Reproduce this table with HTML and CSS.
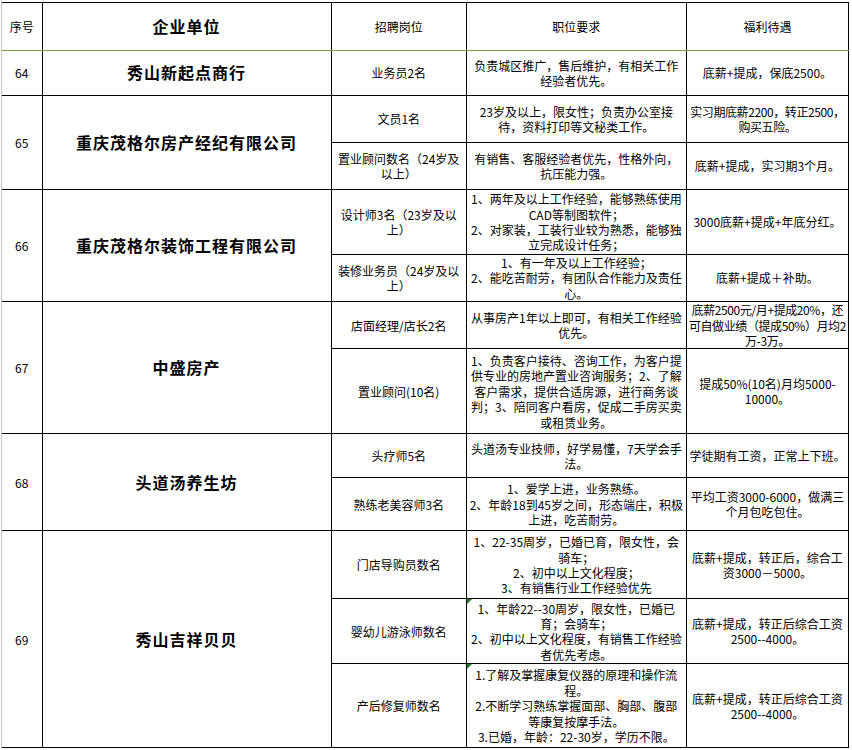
FILE: index.html
```html
<!DOCTYPE html>
<html lang="zh-CN">
<head>
<meta charset="utf-8">
<title>招聘信息</title>
<link rel="stylesheet" href="styles.css">
</head>
<body>
<div class="sheet">
<table class="grid">
<colgroup>
<col class="c-no"><col class="c-co"><col class="c-job"><col class="c-req"><col class="c-pay">
</colgroup>
<tr class="r-head">
<th>序号</th><th class="co">企业单位</th><th>招聘岗位</th><th>职位要求</th><th>福利待遇</th>
</tr>
<tr class="r45">
<td>64</td><td class="co">秀山新起点商行</td><td>业务员2名</td>
<td>负责城区推广，售后维护，有相关工作<br>经验者优先。</td>
<td>底薪+提成，保底2500。</td>
</tr>
<tr class="r47">
<td rowspan="2">65</td><td rowspan="2" class="co">重庆茂格尔房产经纪有限公司</td><td>文员1名</td>
<td>23岁及以上，限女性；负责办公室接<br>待，资料打印等文秘类工作。</td>
<td class="tight">实习期底薪2200，转正2500，<br>购买五险。</td>
</tr>
<tr class="r47">
<td>置业顾问数名（24岁及<br>以上）</td>
<td>有销售、客服经验者优先，性格外向，<br>抗压能力强。</td>
<td>底薪+提成，实习期3个月。</td>
</tr>
<tr class="r65">
<td rowspan="2">66</td><td rowspan="2" class="co">重庆茂格尔装饰工程有限公司</td><td>设计师3名（23岁及以<br>上）</td>
<td>1、两年及以上工作经验，能够熟练使用<br>CAD等制图软件；<br>2、对家装，工装行业较为熟悉，能够独<br>立完成设计任务；</td>
<td>3000底薪+提成+年底分红。</td>
</tr>
<tr class="r47">
<td>装修业务员（24岁及以<br>上）</td>
<td>1、有一年及以上工作经验；<br>2、能吃苦耐劳，有团队合作能力及责任<br>心。</td>
<td>底薪+提成＋补助。</td>
</tr>
<tr class="r47">
<td rowspan="2">67</td><td rowspan="2" class="co">中盛房产</td><td>店面经理/店长2名</td>
<td>从事房产1年以上即可，有相关工作经验<br>优先。</td>
<td class="tight">底薪2500元/月+提成20%，还<br>可自做业绩（提成50%）月均2<br>万-3万。</td>
</tr>
<tr class="r85">
<td>置业顾问(10名)</td>
<td>1、负责客户接待、咨询工作，为客户提<br>供专业的房地产置业咨询服务；2、了解<br>客户需求，提供合适房源，进行商务谈<br>判；3、陪同客户看房，促成二手房买卖<br>或租赁业务。</td>
<td>提成50%(10名)月均5000-<br>10000。</td>
</tr>
<tr class="r44">
<td rowspan="2">68</td><td rowspan="2" class="co">头道汤养生坊</td><td>头疗师5名</td>
<td>头道汤专业技师，好学易懂，7天学会手<br>法。</td>
<td>学徒期有工资，正常上下班。</td>
</tr>
<tr class="r53">
<td>熟练老美容师3名</td>
<td>1、爱学上进，业务熟练。<br>2、年龄18到45岁之间，形态端庄，积极<br>上进，吃苦耐劳。</td>
<td>平均工资3000-6000，做满三<br>个月包吃包住。</td>
</tr>
<tr class="r68">
<td rowspan="3">69</td><td rowspan="3" class="co">秀山吉祥贝贝</td><td>门店导购员数名</td>
<td>1、22-35周岁，已婚已育，限女性，会<br>骑车；<br>2、初中以上文化程度；<br>3、有销售行业工作经验优先</td>
<td>底薪+提成，转正后，综合工<br>资3000－5000。</td>
</tr>
<tr class="r65">
<td>婴幼儿游泳师数名</td>
<td class="flag">1、年龄22--30周岁，限女性，已婚已<br>育；会骑车；<br>2、初中以上文化程度，有销售工作经验<br>者优先考虑。</td>
<td>底薪+提成，转正后综合工资<br>2500--4000。</td>
</tr>
<tr class="r84">
<td>产后修复师数名</td>
<td class="flag">1.了解及掌握康复仪器的原理和操作流<br>程。<br>2.不断学习熟练掌握面部、胸部、腹部<br>等康复按摩手法。<br>3.已婚，年龄：22-30岁，学历不限。</td>
<td>底薪+提成，转正后综合工资<br>2500--4000。</td>
</tr>
</table>
</div>
</body>
</html>
```
FILE: styles.css
```css
html, body {
  margin: 0;
  padding: 0;
  background: #ffffff;
}
body {
  font-family: "Noto Sans CJK SC", "Noto Sans", sans-serif;
  font-size: 12px;
  color: #000000;
}
.sheet {
  margin-left: 1px;
  border-left: 1px solid #c8c8c8;
  padding-top: 2px;
  height: 748px;
  box-sizing: border-box;
  overflow: hidden;
}
.grid {
  border-collapse: collapse;
  table-layout: fixed;
  width: 847px;
}
.c-no { width: 40px; }
.c-co { width: 289px; }
.c-job { width: 135px; }
.c-req { width: 220px; }
.c-pay { width: 162px; }
.grid th,
.grid td {
  border: 1px solid #000000;
  padding: 0;
  text-align: center;
  vertical-align: middle;
  white-space: nowrap;
  line-height: 15.4px;
  font-weight: normal;
  font-size: 12px;
}
.grid tr > :first-child {
  border-left: none;
}
.grid th {
  border-bottom: 1px solid #76a04f;
}
.grid .co {
  font-size: 16px;
  font-weight: 700;
  letter-spacing: 1px;
}
.grid .tight {
  letter-spacing: -0.4px;
}
.r-head { height: 48px; }
.r44 { height: 44px; }
.r45 { height: 45px; }
.r47 { height: 47px; }
.r53 { height: 53px; }
.r65 { height: 65px; }
.r68 { height: 68px; }
.r84 { height: 84px; }
.r85 { height: 85px; }
.flag {
  position: relative;
}
.flag::before {
  content: "";
  position: absolute;
  left: 0;
  top: 0;
  width: 0;
  height: 0;
  border-top: 5px solid #1f7a1f;
  border-right: 5px solid transparent;
}
```
